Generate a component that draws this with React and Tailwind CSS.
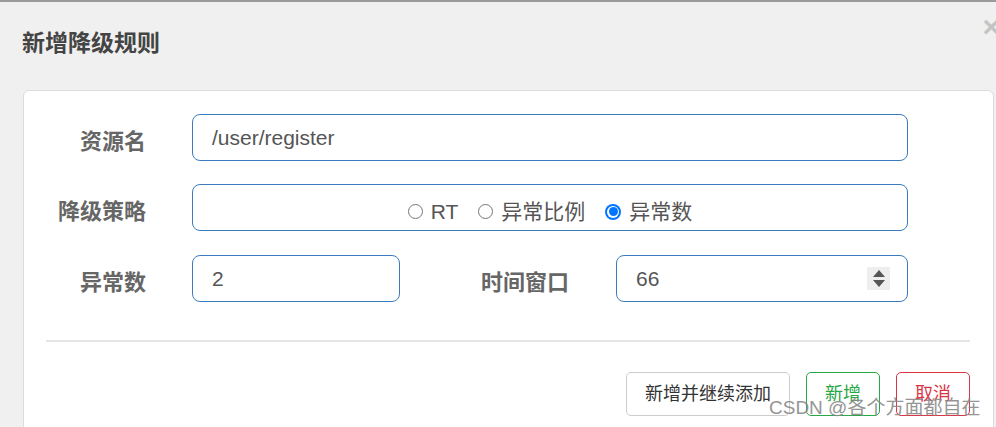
import React from "react";

const FONT = { fontFamily: '"Liberation Sans", "Noto Sans CJK SC", sans-serif' };

function Radio({ checked, label }) {
  return (
    <label className="flex items-center">
      {checked ? (
        <span className="flex h-[16px] w-[16px] items-center justify-center rounded-full bg-[#0075ff]">
          <span className="flex h-[12px] w-[12px] items-center justify-center rounded-full bg-white">
            <span className="h-[9px] w-[9px] rounded-full bg-[#0075ff]" />
          </span>
        </span>
      ) : (
        <span className="h-[15px] w-[15px] rounded-full border border-[#767676] bg-white" />
      )}
      <span className="ml-[8px] text-[21px] text-[#555]">{label}</span>
    </label>
  );
}

export default function App() {
  return (
    <div
      className="h-[427px] w-[996px] overflow-hidden border-t-2 border-[#9a9a9a] bg-[#f0f0f0]"
      style={FONT}
    >
      <div className="relative h-[88px]">
        <h4 className="pl-[22px] pt-[26px] text-[23px] font-bold leading-[30px] text-[#444]">
          新增降级规则
        </h4>
        <span className="absolute right-[-4px] top-[10px] text-[30px] font-bold leading-[30px] text-[#c4c4c4]">
          ×
        </span>
      </div>
      <div className="relative ml-[23px] mr-[2px] h-[400px] rounded-t-[6px] border border-[#dcdcdc] bg-white px-[22px] pt-[23px]">
        <div className="flex items-center">
          <label className="mt-[8px] w-[100px] text-right text-[22px] font-bold text-[#666]">资源名</label>
          <div className="ml-[46px] flex h-[47px] w-[716px] items-center rounded-[8px] border border-[#3a7cbd] px-[19px] text-[21px] text-[#555]">
            /user/register
          </div>
        </div>
        <div className="mt-[23px] flex items-center">
          <label className="mt-[8px] w-[100px] text-right text-[22px] font-bold text-[#666]">降级策略</label>
          <div className="ml-[46px] flex h-[47px] w-[716px] items-center justify-center rounded-[8px] border border-[#3a7cbd] pt-[8px]">
            <div className="flex items-center gap-[20px]">
              <Radio label="RT" />
              <Radio label="异常比例" />
              <Radio label="异常数" checked />
            </div>
          </div>
        </div>
        <div className="mt-[24px] flex items-center">
          <label className="mt-[8px] w-[100px] text-right text-[22px] font-bold text-[#666]">异常数</label>
          <div className="ml-[46px] flex h-[47px] w-[208px] items-center rounded-[8px] border border-[#3a7cbd] px-[19px] text-[21px] text-[#555]">
            2
          </div>
          <label className="mt-[8px] w-[169px] text-right text-[22px] font-bold text-[#666]">时间窗口</label>
          <div className="ml-[47px] flex h-[47px] w-[292px] items-center justify-between rounded-[8px] border border-[#3a7cbd] pl-[19px] pr-[17px] text-[21px] text-[#555]">
            <span>66</span>
            <span className="flex h-[23px] w-[23px] flex-col items-center justify-center gap-[3px] bg-[#eeeeee]">
              <svg width="12" height="7" viewBox="0 0 12 7"><path d="M6 0 L12 7 L0 7 Z" fill="#555" /></svg>
              <svg width="12" height="7" viewBox="0 0 12 7"><path d="M0 0 L12 0 L6 7 Z" fill="#555" /></svg>
            </span>
          </div>
        </div>
        <div className="mt-[38px] h-[2px] w-[924px] bg-[#e5e5e5]" />
        <div className="mt-[30px] flex w-[924px] justify-end gap-[16px]">
          <button className="h-[44px] w-[164px] rounded-[5px] border border-[#cccccc] bg-white text-[18px] text-[#333]">
            新增并继续添加
          </button>
          <button className="h-[44px] w-[74px] rounded-[5px] border border-[#28a745] bg-white text-[18px] text-[#28a745]">
            新增
          </button>
          <button className="h-[44px] w-[74px] rounded-[5px] border border-[#dc3545] bg-white text-[18px] text-[#dc3545]">
            取消
          </button>
        </div>
        <span className="absolute left-[745px] top-[303px] text-[19px] text-[#8a8a8a] opacity-90">
          CSDN @各个方面都自在
        </span>
      </div>
    </div>
  );
}
